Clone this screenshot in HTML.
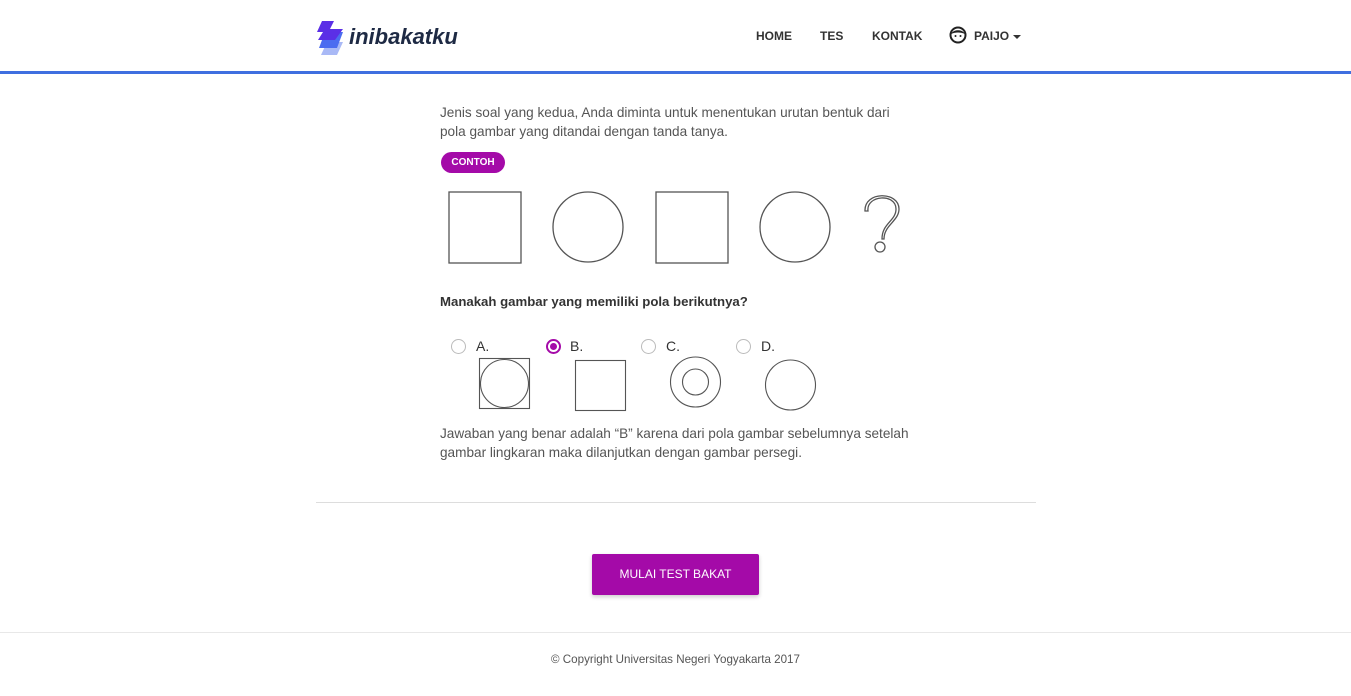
<!DOCTYPE html>
<html><head><meta charset="utf-8"><style>
*{margin:0;padding:0;box-sizing:border-box}
body{width:1351px;height:696px;background:#fff;font-family:"Liberation Sans",sans-serif;color:#444;position:relative;overflow:hidden}
.hdr{position:absolute;left:0;top:0;width:1351px;height:74px;border-bottom:3px solid #3f6fe0;background:#fff}
.nav{position:absolute;top:29px;font-size:12px;font-weight:bold;color:#333}
.logo{position:absolute;left:349px;top:24px;font-size:22px;font-weight:bold;font-style:italic;color:#1e2a44}
.t{position:absolute;left:440px;font-size:13.6px;color:#555;line-height:19px}
.a{position:absolute;font-size:14px;color:#333}
.r{position:absolute;width:15px;height:15px;border:1px solid #bbb;border-radius:50%}
</style></head><body>
<div class="hdr">
<svg style="position:absolute;left:315px;top:20px" width="32" height="36" viewBox="0 0 32 36">
<polygon points="12,22 28,22 22,35 6,35" fill="#a9b9f6"/>
<polygon points="10,12 28,12 22,28 4,28" fill="#4b6cf0"/>
<polygon points="7,1 19,1 15,9 28,9 20,20 3,20 8,12 2,12" fill="#5b2fe6"/>
</svg>
<div class="logo">inibakatku</div>
<div class="nav" style="left:756px">HOME</div>
<div class="nav" style="left:820px">TES</div>
<div class="nav" style="left:872px">KONTAK</div>
<svg style="position:absolute;left:949px;top:26px" width="18" height="18" viewBox="0 0 18 18"><circle cx="9" cy="9" r="7.5" fill="none" stroke="#222" stroke-width="2"/><path d="M2,8 C4,3 14,3 16,8 C12,6 6,6 2,8Z" fill="#222"/><circle cx="6.5" cy="10" r="1" fill="#222"/><circle cx="11.5" cy="10" r="1" fill="#222"/></svg>
<div class="nav" style="left:974px">PAIJO</div>
<div style="position:absolute;left:1013px;top:35px;border-left:4px solid transparent;border-right:4px solid transparent;border-top:4px solid #333"></div>
</div>
<div class="t" style="top:103px">Jenis soal yang kedua, Anda diminta untuk menentukan urutan bentuk dari<br>pola gambar yang ditandai dengan tanda tanya.</div>
<div style="position:absolute;left:441px;top:152px;width:64px;height:21px;border-radius:11px;background:#a40aa8;color:#fff;font-size:10px;font-weight:bold;text-align:center;line-height:21px">CONTOH</div>
<svg style="position:absolute;left:440px;top:185px" width="470" height="85">
<g fill="none" stroke="#555" stroke-width="1.3">
<rect x="9" y="7" width="72" height="71"/>
<circle cx="148" cy="42" r="35"/>
<rect x="216" y="7" width="72" height="71"/>
<circle cx="355" cy="42" r="35"/>
<path d="M428,26 C426,10 456,8 456,24 C456,36 442,38 442,54 L444,54 C444,40 459,36 459,24 C459,6 424,6 425,26Z"/>
<circle cx="440" cy="62" r="5"/>
</g></svg>
<div class="t" style="top:292px;font-weight:bold;color:#333;font-size:13.2px">Manakah gambar yang memiliki pola berikutnya?</div>
<div class="r" style="left:451px;top:339px"></div><div class="a" style="left:476px;top:338px">A.</div>
<div class="r" style="left:546px;top:339px;border:2px solid #a40aa8"><div style="position:absolute;left:2px;top:2px;width:7px;height:7px;border-radius:50%;background:#a40aa8"></div></div><div class="a" style="left:570px;top:338px">B.</div>
<div class="r" style="left:641px;top:339px"></div><div class="a" style="left:666px;top:338px">C.</div>
<div class="r" style="left:736px;top:339px"></div><div class="a" style="left:761px;top:338px">D.</div>
<svg style="position:absolute;left:470px;top:355px" width="360" height="60">
<g fill="none" stroke="#555" stroke-width="1.1">
<rect x="9.5" y="3.5" width="50" height="50"/><circle cx="34.5" cy="28.5" r="24"/>
<rect x="105.5" y="5.5" width="50" height="50"/>
<circle cx="225.5" cy="27" r="25"/><circle cx="225.5" cy="27" r="13"/>
<circle cx="320.5" cy="30" r="25"/>
</g></svg>
<div class="t" style="top:424px">Jawaban yang benar adalah “B” karena dari pola gambar sebelumnya setelah<br>gambar lingkaran maka dilanjutkan dengan gambar persegi.</div>
<div style="position:absolute;left:316px;top:502px;width:720px;height:1px;background:#ddd"></div>
<div style="position:absolute;left:592px;top:554px;width:167px;height:41px;background:#a40aa8;color:#fff;font-size:12px;text-align:center;line-height:41px;border-radius:2px;box-shadow:0 2px 4px rgba(0,0,0,.2)">MULAI TEST BAKAT</div>
<div style="position:absolute;left:0;top:632px;width:1351px;height:1px;background:#e8e8e8"></div>
<div style="position:absolute;left:0;top:653px;width:1351px;text-align:center;font-size:11.6px;color:#555">© Copyright Universitas Negeri Yogyakarta 2017</div>
</body></html>
